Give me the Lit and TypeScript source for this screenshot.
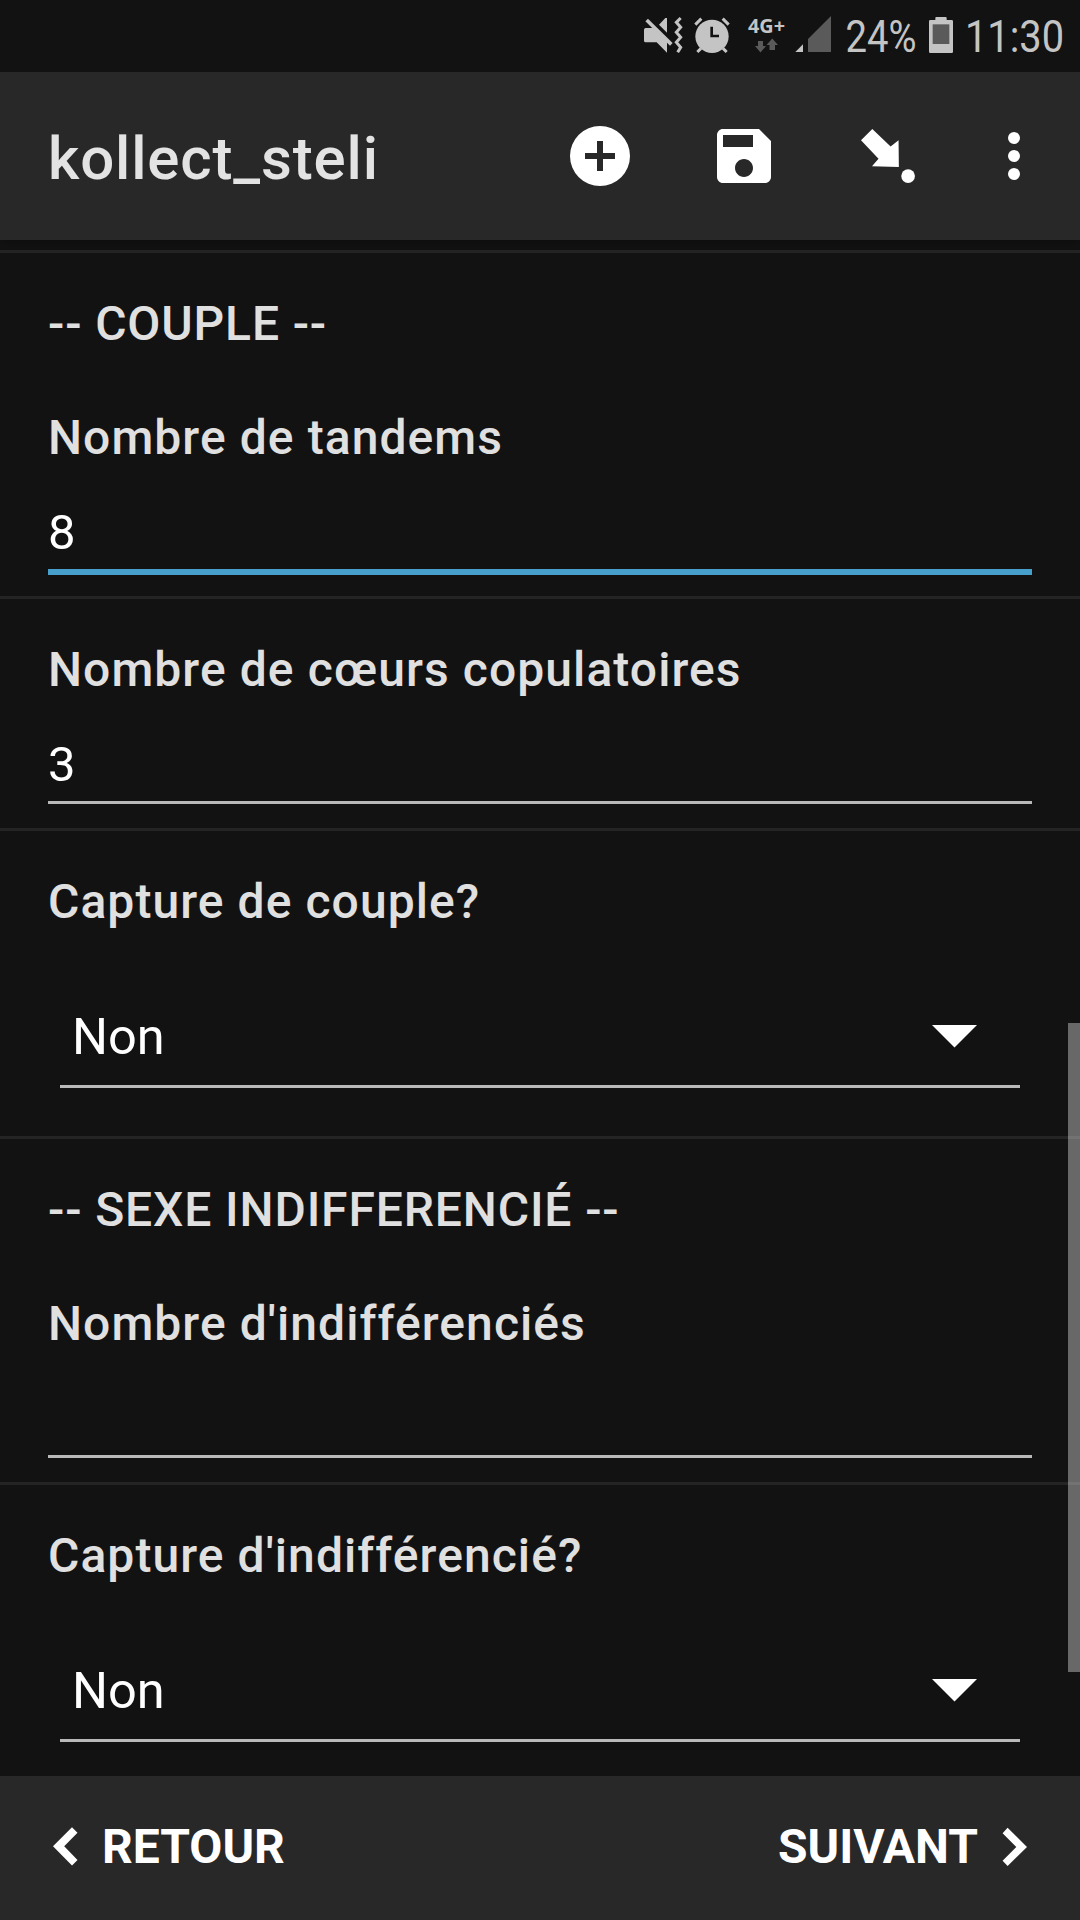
import { LitElement, html, css, svg } from "lit";
import { customElement, property } from "lit/decorators.js";

@customElement("status-bar")
class StatusBar extends LitElement {
  static styles = css`
    :host { display: block; height: 72px; background: #121212; }
    .row { display: flex; height: 72px; padding-left: 630px; box-sizing: border-box; }
    svg { display: block; flex: none; fill: #c4c4c4; overflow: visible; }
    text { font-family: Roboto, "Liberation Sans", sans-serif; font-size: 45px; }
    .net { font-family: "Noto Sans", "Open Sans", sans-serif; font-weight: 700; font-size: 19px; }
    .dim { fill: #5a5a5a; }
    .wave { fill: none; stroke: #c4c4c4; stroke-width: 9; }
    .slash { fill: none; stroke: #c4c4c4; stroke-width: 11; }
    .leg { fill: none; stroke: #c4c4c4; stroke-width: 9; }
    .hand { fill: none; stroke: #121212; stroke-width: 8; }
  `;
  render() {
    return html`<div class="row">
      <svg width="60" height="72" viewBox="0 0 180 216">
        <path d="M47 84h27l37 37v37L80 127H47q-5 0-5-5V89q0-5 5-5zM87 74l19-20h5v44z" />
        <path class="slash" d="M50 60l74 73" />
        <path class="wave" d="M152 54l-13 13 13 15-13 15 13 15-13 15 13 15-9 15" />
      </svg>
      <svg width="45" height="72" viewBox="180 0 135 216">
        <circle cx="246" cy="109" r="50" />
        <path class="leg" d="M196 74l18-18M296 74l-18-18M213 145l-11 11M279 145l11 11" />
        <path class="hand" d="M245 80v28h22" />
      </svg>
      <svg width="60" height="72" viewBox="105 0 60 72">
        <text class="net" x="118" y="33" textLength="37" lengthAdjust="spacingAndGlyphs">4G+</text>
        <path class="dim" d="M128 41h5v5h3l-5.500 6.500L125 46h3zM139.500 50h5.500v-5h3l-5.700-6.500-5.800 6.500h3z" />
      </svg>
      <svg width="45" height="72" viewBox="495 0 135 216">
        <path d="M496 156l23-23v23z" />
        <path class="dim" d="M534 156v-39l69-69v108z" />
      </svg>
      <svg width="84" height="72" viewBox="210 0 84 72">
        <text x="215.500" y="52" textLength="71" lengthAdjust="spacingAndGlyphs">24%</text>
      </svg>
      <svg width="36" height="72" viewBox="882 0 108 216">
        <path d="M916 60v-6q0-3 3-3h28q3 0 3 3v6h15q4 0 4 4v91q0 4-4 4h-64q-4 0-4-4V64q0-4 4-4z" />
        <path class="dim" d="M908 73h50v59h-50z" />
      </svg>
      <svg width="120" height="72" viewBox="330 0 120 72">
        <text x="335" y="52" textLength="99" lengthAdjust="spacingAndGlyphs">11:30</text>
      </svg>
    </div>`;
  }
}

const toolbarIcons = {
  add: svg`<path d="M12 2a10 10 0 100 20 10 10 0 000-20zm5 11h-4v4h-2v-4H7v-2h4V7h2v4h4z"/>`,
  save: svg`<path d="M17 3H5c-1.110 0-2 .9-2 2v14c0 1.100.89 2 2 2h14c1.100 0 2-.9 2-2V7l-4-4zm-5 16c-1.660 0-3-1.340-3-3s1.340-3 3-3 3 1.340 3 3-1.340 3-3 3zm3-10H5V5h10v4z"/>`,
  jump: svg`<path d="M6.770 3L3 6.780l5.840 6.120-2.180 2.500 8.960.27-.1-8.900-2.650 2.030z"/><circle cx="18.700" cy="18.700" r="2.280"/>`,
  more: svg`<circle cx="12" cy="6" r="2"/><circle cx="12" cy="12" r="2"/><circle cx="12" cy="18" r="2"/>`,
};

@customElement("app-toolbar")
class AppToolbar extends LitElement {
  @property() heading = "";
  static styles = css`
    :host { display: block; position: relative; z-index: 1; background: #282828; box-shadow: 0 2px 10px rgba(0, 0, 0, 0.3); clip-path: inset(0 0 -20px 0); }
    .bar { display: flex; align-items: center; height: 168px; box-sizing: border-box; padding: 0 30px 0 48px; }
    .title { flex: 1; font-size: 60px; line-height: 70px; font-weight: 500; letter-spacing: 0.85px; color: #e3e3e3; padding-top: 6px; }
    .actions { display: flex; gap: 72px; }
    svg { display: block; width: 72px; height: 72px; fill: #fff; }
    .last { margin-left: -18px; }
  `;
  render() {
    return html`<div class="bar">
      <div class="title">${this.heading}</div>
      <div class="actions">
        <svg viewBox="0 0 24 24">${toolbarIcons.add}</svg>
        <svg viewBox="0 0 24 24">${toolbarIcons.save}</svg>
        <svg viewBox="0 0 24 24">${toolbarIcons.jump}</svg>
        <svg class="last" viewBox="0 0 24 24">${toolbarIcons.more}</svg>
      </div>
    </div>`;
  }
}

interface Question {
  section?: string;
  label: string;
  kind: "number" | "select";
  value: string;
  focused?: boolean;
}

@customElement("form-question")
class FormQuestion extends LitElement {
  @property({ attribute: false }) q!: Question;
  static styles = css`
    :host { display: block; border-top: 3px solid #242424; padding: 43px 48px 0; }
    .section, .label { font-size: 48px; line-height: 56px; font-weight: 500; color: #e0e0e0; white-space: nowrap; letter-spacing: 0.87px; }
    .label { letter-spacing: 1.07px; }
    .section { margin-bottom: 58px; }
    .number { margin-top: 39px; height: 64px; margin-bottom: 27px; box-shadow: 0 3px #b9b9b9; font-size: 49px; line-height: 56px; color: #fff; }
    .focused { box-shadow: 0 6px #479fcb; }
    .select { display: flex; justify-content: space-between; margin: 78px 12px 48px; height: 77px; padding: 0 43px 0 12px; border-bottom: 3px solid #b9b9b9; font-size: 50.5px; line-height: 58px; color: #fff; }
    .caret { display: block; fill: #fff; margin-top: 17px; }
  `;
  render() {
    const { section, label, kind, value, focused } = this.q;
    return html`
      ${section ? html`<div class="section">${section}</div>` : null}
      <div class="label">${label}</div>
      ${kind === "number"
        ? html`<div class="number ${focused ? "focused" : ""}">${value}</div>`
        : html`<div class="select">
            <span>${value}</span>
            <svg class="caret" width="45" height="23" viewBox="0 0 45 23"><path d="M0 0h45L22.500 22.500z" /></svg>
          </div>`}
    `;
  }
}

@customElement("nav-footer")
class NavFooter extends LitElement {
  static styles = css`
    :host { display: block; position: relative; background: #282828; }
    .bar { display: flex; justify-content: space-between; height: 144px; box-sizing: border-box; padding: 43px 53px 0 53px; }
    .button { display: flex; color: #fff; font-size: 48px; line-height: 56px; font-weight: 700; }
    svg { display: block; width: 25px; height: 39px; fill: #fff; margin-top: 8px; }
    .prev { gap: 24px; }
    .next { gap: 24px; }
  `;
  render() {
    return html`<div class="bar">
      <div class="button prev">
        <svg viewBox="0 0 25 39"><path d="M19 .3L24.500 5.700 11.200 19.300 24.500 33l-5.500 5.500L0 19.300z" /></svg>
        <span>RETOUR</span>
      </div>
      <div class="button next">
        <span>SUIVANT</span>
        <svg viewBox="0 0 25 39"><path d="M5.600.8L.6 6.200 14.300 20 .6 33.800l5 5.200L25 20z" /></svg>
      </div>
    </div>`;
  }
}

const questions: Question[] = [
  { section: "-- COUPLE --", label: "Nombre de tandems", kind: "number", value: "8", focused: true },
  { label: "Nombre de cœurs copulatoires", kind: "number", value: "3" },
  { label: "Capture de couple?", kind: "select", value: "Non" },
  { section: "-- SEXE INDIFFERENCIÉ --", label: "Nombre d'indifférenciés", kind: "number", value: "" },
  { label: "Capture d'indifférencié?", kind: "select", value: "Non" },
];

@customElement("app-root")
class AppRoot extends LitElement {
  static styles = css`
    :host { display: flex; flex-direction: column; width: 1080px; height: 1920px; overflow: hidden; background: #121212; font-family: Roboto, "Liberation Sans", sans-serif; }
    .body { position: relative; flex: 1; min-height: 0; overflow: hidden; padding-top: 10px; box-sizing: border-box; }
    .thumb { position: absolute; right: 0; top: 783px; width: 12px; height: 649px; background: rgba(255, 255, 255, 0.365); }
  `;
  render() {
    return html`
      <status-bar></status-bar>
      <app-toolbar heading="kollect_steli"></app-toolbar>
      <div class="body">
        ${questions.map((q) => html`<form-question .q=${q}></form-question>`)}
        <div class="thumb"></div>
      </div>
      <nav-footer></nav-footer>
    `;
  }
}
